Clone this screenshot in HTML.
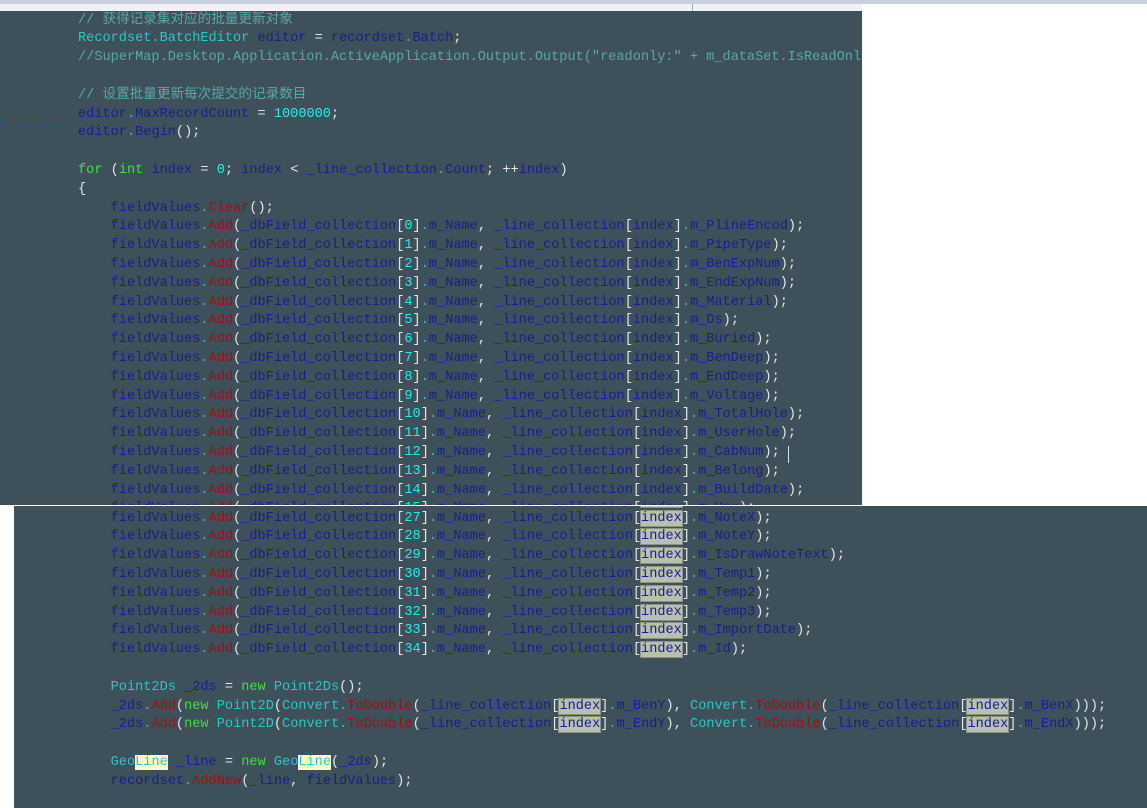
<!DOCTYPE html>
<html><head><meta charset="utf-8">
<style>
html,body{margin:0;padding:0;background:#fff;width:1147px;height:808px;overflow:hidden;position:relative}
.bar{position:absolute;left:0;top:0;width:1147px;height:4px;background:#c8d0e0}
.tab{position:absolute;left:0;top:4px;width:862px;height:7px;background:#f0f2f6;overflow:hidden}
.tab .dv{position:absolute;left:692px;top:0;width:1px;height:7px;background:#a0a8b8}
.panel{position:absolute;background:#3e505a;overflow:hidden}
#p1{left:0;top:11px;width:862px;height:494px}
#p2{left:14px;top:506px;width:1133px;height:302px}
.l{position:absolute;white-space:pre;font-family:"Liberation Mono","Noto Sans CJK SC",monospace;font-size:13.6px;line-height:18.8px;height:18.8px;color:#16208e}
.n{color:#16208e}.t{color:#2cc6c6}.c{color:#58a8a8}.m{color:#9a1212}.k{color:#3ee03e}.d{color:#22eeee}.p{color:#e6e6e6}.o{color:#3ab8c0}
.h{background:#b9c0b2;outline:1px solid #8c9282}
.y{background:#ffffc0;color:#2cc6c6}
.red{position:absolute;left:0;top:123px;width:50px;height:1px;border-top:1px dashed #c02020}
.cur{position:absolute;left:788px;top:446px;width:1px;height:17px;background:#e0e0e0}
</style></head><body>
<div class="bar"></div>
<div class="tab"><div class="dv"></div></div>
<div class="panel" id="p1">
<div class="l c" style="left:78px;top:0.6px">// 获得记录集对应的批量更新对象</div>
<div class="l" style="left:78px;top:19.4px"><span class="t">Recordset.BatchEditor</span> editor <span class="p">=</span> recordset<span class="o">.</span>Batch<span class="p">;</span></div>
<div class="l c" style="left:78px;top:38.2px">//SuperMap.Desktop.Application.ActiveApplication.Output.Output("readonly:" + m_dataSet.IsReadOnly);</div>
<div class="l c" style="left:78px;top:75.8px">// 设置批量更新每次提交的记录数目</div>
<div class="l" style="left:78px;top:94.6px">editor<span class="o">.</span>MaxRecordCount <span class="p">=</span> <span class="d">1000000</span><span class="p">;</span></div>
<div class="l" style="left:78px;top:113.4px">editor<span class="o">.</span>Begin<span class="p">();</span></div>
<div class="l" style="left:78px;top:151px"><span class="k">for</span> <span class="p">(</span><span class="k">int</span> index <span class="p">=</span> <span class="d">0</span><span class="p">;</span> index <span class="p">&lt;</span> _line_collection<span class="o">.</span>Count<span class="p">;</span> <span class="p">++</span>index<span class="p">)</span></div>
<div class="l p" style="left:78px;top:169.8px">{</div>
<div class="l" style="left:78px;top:188.6px">    fieldValues<span class="o">.</span><span class="m">Clear</span><span class="p">();</span></div>
<div class="l" style="left:78px;top:207.4px">    fieldValues<span class="o">.</span><span class="m">Add</span><span class="p">(</span>_dbField_collection<span class="p">[</span><span class="d">0</span><span class="p">]</span><span class="o">.</span>m_Name<span class="p">,</span> _line_collection<span class="p">[</span>index<span class="p">]</span><span class="o">.</span>m_PlineEncod<span class="p">);</span></div>
<div class="l" style="left:78px;top:226.2px">    fieldValues<span class="o">.</span><span class="m">Add</span><span class="p">(</span>_dbField_collection<span class="p">[</span><span class="d">1</span><span class="p">]</span><span class="o">.</span>m_Name<span class="p">,</span> _line_collection<span class="p">[</span>index<span class="p">]</span><span class="o">.</span>m_PipeType<span class="p">);</span></div>
<div class="l" style="left:78px;top:245px">    fieldValues<span class="o">.</span><span class="m">Add</span><span class="p">(</span>_dbField_collection<span class="p">[</span><span class="d">2</span><span class="p">]</span><span class="o">.</span>m_Name<span class="p">,</span> _line_collection<span class="p">[</span>index<span class="p">]</span><span class="o">.</span>m_BenExpNum<span class="p">);</span></div>
<div class="l" style="left:78px;top:263.8px">    fieldValues<span class="o">.</span><span class="m">Add</span><span class="p">(</span>_dbField_collection<span class="p">[</span><span class="d">3</span><span class="p">]</span><span class="o">.</span>m_Name<span class="p">,</span> _line_collection<span class="p">[</span>index<span class="p">]</span><span class="o">.</span>m_EndExpNum<span class="p">);</span></div>
<div class="l" style="left:78px;top:282.6px">    fieldValues<span class="o">.</span><span class="m">Add</span><span class="p">(</span>_dbField_collection<span class="p">[</span><span class="d">4</span><span class="p">]</span><span class="o">.</span>m_Name<span class="p">,</span> _line_collection<span class="p">[</span>index<span class="p">]</span><span class="o">.</span>m_Material<span class="p">);</span></div>
<div class="l" style="left:78px;top:301.4px">    fieldValues<span class="o">.</span><span class="m">Add</span><span class="p">(</span>_dbField_collection<span class="p">[</span><span class="d">5</span><span class="p">]</span><span class="o">.</span>m_Name<span class="p">,</span> _line_collection<span class="p">[</span>index<span class="p">]</span><span class="o">.</span>m_Ds<span class="p">);</span></div>
<div class="l" style="left:78px;top:320.2px">    fieldValues<span class="o">.</span><span class="m">Add</span><span class="p">(</span>_dbField_collection<span class="p">[</span><span class="d">6</span><span class="p">]</span><span class="o">.</span>m_Name<span class="p">,</span> _line_collection<span class="p">[</span>index<span class="p">]</span><span class="o">.</span>m_Buried<span class="p">);</span></div>
<div class="l" style="left:78px;top:339px">    fieldValues<span class="o">.</span><span class="m">Add</span><span class="p">(</span>_dbField_collection<span class="p">[</span><span class="d">7</span><span class="p">]</span><span class="o">.</span>m_Name<span class="p">,</span> _line_collection<span class="p">[</span>index<span class="p">]</span><span class="o">.</span>m_BenDeep<span class="p">);</span></div>
<div class="l" style="left:78px;top:357.8px">    fieldValues<span class="o">.</span><span class="m">Add</span><span class="p">(</span>_dbField_collection<span class="p">[</span><span class="d">8</span><span class="p">]</span><span class="o">.</span>m_Name<span class="p">,</span> _line_collection<span class="p">[</span>index<span class="p">]</span><span class="o">.</span>m_EndDeep<span class="p">);</span></div>
<div class="l" style="left:78px;top:376.6px">    fieldValues<span class="o">.</span><span class="m">Add</span><span class="p">(</span>_dbField_collection<span class="p">[</span><span class="d">9</span><span class="p">]</span><span class="o">.</span>m_Name<span class="p">,</span> _line_collection<span class="p">[</span>index<span class="p">]</span><span class="o">.</span>m_Voltage<span class="p">);</span></div>
<div class="l" style="left:78px;top:395.4px">    fieldValues<span class="o">.</span><span class="m">Add</span><span class="p">(</span>_dbField_collection<span class="p">[</span><span class="d">10</span><span class="p">]</span><span class="o">.</span>m_Name<span class="p">,</span> _line_collection<span class="p">[</span>index<span class="p">]</span><span class="o">.</span>m_TotalHole<span class="p">);</span></div>
<div class="l" style="left:78px;top:414.2px">    fieldValues<span class="o">.</span><span class="m">Add</span><span class="p">(</span>_dbField_collection<span class="p">[</span><span class="d">11</span><span class="p">]</span><span class="o">.</span>m_Name<span class="p">,</span> _line_collection<span class="p">[</span>index<span class="p">]</span><span class="o">.</span>m_UserHole<span class="p">);</span></div>
<div class="l" style="left:78px;top:433px">    fieldValues<span class="o">.</span><span class="m">Add</span><span class="p">(</span>_dbField_collection<span class="p">[</span><span class="d">12</span><span class="p">]</span><span class="o">.</span>m_Name<span class="p">,</span> _line_collection<span class="p">[</span>index<span class="p">]</span><span class="o">.</span>m_CabNum<span class="p">);</span></div>
<div class="l" style="left:78px;top:451.8px">    fieldValues<span class="o">.</span><span class="m">Add</span><span class="p">(</span>_dbField_collection<span class="p">[</span><span class="d">13</span><span class="p">]</span><span class="o">.</span>m_Name<span class="p">,</span> _line_collection<span class="p">[</span>index<span class="p">]</span><span class="o">.</span>m_Belong<span class="p">);</span></div>
<div class="l" style="left:78px;top:470.6px">    fieldValues<span class="o">.</span><span class="m">Add</span><span class="p">(</span>_dbField_collection<span class="p">[</span><span class="d">14</span><span class="p">]</span><span class="o">.</span>m_Name<span class="p">,</span> _line_collection<span class="p">[</span>index<span class="p">]</span><span class="o">.</span>m_BuildDate<span class="p">);</span></div>
<div class="l" style="left:78px;top:489.4px">    fieldValues<span class="o">.</span><span class="m">Add</span><span class="p">(</span>_dbField_collection<span class="p">[</span><span class="d">15</span><span class="p">]</span><span class="o">.</span>m_Name<span class="p">,</span> _line_collection<span class="p">[</span>index<span class="p">]</span><span class="o">.</span>m_Use<span class="p">);</span></div>
</div>
<div class="red"></div>
<div class="cur"></div>
<div class="panel" id="p2">
<div class="l" style="left:64px;top:-15.2px">    fieldValues<span class="o">.</span><span class="m">Add</span><span class="p">(</span>_dbField_collection<span class="p">[</span><span class="d">26</span><span class="p">]</span><span class="o">.</span>m_Name<span class="p">,</span> _line_collection<span class="p">[</span><span class="h">index</span><span class="p">]</span><span class="o">.</span>m_NoteText<span class="p">);</span></div>
<div class="l" style="left:64px;top:3.6px">    fieldValues<span class="o">.</span><span class="m">Add</span><span class="p">(</span>_dbField_collection<span class="p">[</span><span class="d">27</span><span class="p">]</span><span class="o">.</span>m_Name<span class="p">,</span> _line_collection<span class="p">[</span><span class="h">index</span><span class="p">]</span><span class="o">.</span>m_NoteX<span class="p">);</span></div>
<div class="l" style="left:64px;top:22.4px">    fieldValues<span class="o">.</span><span class="m">Add</span><span class="p">(</span>_dbField_collection<span class="p">[</span><span class="d">28</span><span class="p">]</span><span class="o">.</span>m_Name<span class="p">,</span> _line_collection<span class="p">[</span><span class="h">index</span><span class="p">]</span><span class="o">.</span>m_NoteY<span class="p">);</span></div>
<div class="l" style="left:64px;top:41.2px">    fieldValues<span class="o">.</span><span class="m">Add</span><span class="p">(</span>_dbField_collection<span class="p">[</span><span class="d">29</span><span class="p">]</span><span class="o">.</span>m_Name<span class="p">,</span> _line_collection<span class="p">[</span><span class="h">index</span><span class="p">]</span><span class="o">.</span>m_IsDrawNoteText<span class="p">);</span></div>
<div class="l" style="left:64px;top:60px">    fieldValues<span class="o">.</span><span class="m">Add</span><span class="p">(</span>_dbField_collection<span class="p">[</span><span class="d">30</span><span class="p">]</span><span class="o">.</span>m_Name<span class="p">,</span> _line_collection<span class="p">[</span><span class="h">index</span><span class="p">]</span><span class="o">.</span>m_Temp1<span class="p">);</span></div>
<div class="l" style="left:64px;top:78.8px">    fieldValues<span class="o">.</span><span class="m">Add</span><span class="p">(</span>_dbField_collection<span class="p">[</span><span class="d">31</span><span class="p">]</span><span class="o">.</span>m_Name<span class="p">,</span> _line_collection<span class="p">[</span><span class="h">index</span><span class="p">]</span><span class="o">.</span>m_Temp2<span class="p">);</span></div>
<div class="l" style="left:64px;top:97.6px">    fieldValues<span class="o">.</span><span class="m">Add</span><span class="p">(</span>_dbField_collection<span class="p">[</span><span class="d">32</span><span class="p">]</span><span class="o">.</span>m_Name<span class="p">,</span> _line_collection<span class="p">[</span><span class="h">index</span><span class="p">]</span><span class="o">.</span>m_Temp3<span class="p">);</span></div>
<div class="l" style="left:64px;top:116.4px">    fieldValues<span class="o">.</span><span class="m">Add</span><span class="p">(</span>_dbField_collection<span class="p">[</span><span class="d">33</span><span class="p">]</span><span class="o">.</span>m_Name<span class="p">,</span> _line_collection<span class="p">[</span><span class="h">index</span><span class="p">]</span><span class="o">.</span>m_ImportDate<span class="p">);</span></div>
<div class="l" style="left:64px;top:135.2px">    fieldValues<span class="o">.</span><span class="m">Add</span><span class="p">(</span>_dbField_collection<span class="p">[</span><span class="d">34</span><span class="p">]</span><span class="o">.</span>m_Name<span class="p">,</span> _line_collection<span class="p">[</span><span class="h">index</span><span class="p">]</span><span class="o">.</span>m_Id<span class="p">);</span></div>
<div class="l" style="left:64px;top:172.8px">    <span class="t">Point2Ds</span> _2ds <span class="p">=</span> <span class="k">new</span> <span class="t">Point2Ds</span><span class="p">();</span></div>
<div class="l" style="left:64px;top:191.6px">    _2ds<span class="o">.</span><span class="m">Add</span><span class="p">(</span><span class="k">new</span> <span class="t">Point2D</span><span class="p">(</span><span class="t">Convert</span><span class="o">.</span><span class="m">ToDouble</span><span class="p">(</span>_line_collection<span class="p">[</span><span class="h">index</span><span class="p">]</span><span class="o">.</span>m_BenY<span class="p">),</span> <span class="t">Convert</span><span class="o">.</span><span class="m">ToDouble</span><span class="p">(</span>_line_collection<span class="p">[</span><span class="h">index</span><span class="p">]</span><span class="o">.</span>m_BenX<span class="p">)));</span></div>
<div class="l" style="left:64px;top:210.4px">    _2ds<span class="o">.</span><span class="m">Add</span><span class="p">(</span><span class="k">new</span> <span class="t">Point2D</span><span class="p">(</span><span class="t">Convert</span><span class="o">.</span><span class="m">ToDouble</span><span class="p">(</span>_line_collection<span class="p">[</span><span class="h">index</span><span class="p">]</span><span class="o">.</span>m_EndY<span class="p">),</span> <span class="t">Convert</span><span class="o">.</span><span class="m">ToDouble</span><span class="p">(</span>_line_collection<span class="p">[</span><span class="h">index</span><span class="p">]</span><span class="o">.</span>m_EndX<span class="p">)));</span></div>
<div class="l" style="left:64px;top:248px">    <span class="t">Geo</span><span class="y">Line</span> _line <span class="p">=</span> <span class="k">new</span> <span class="t">Geo</span><span class="y">Line</span><span class="p">(</span>_2ds<span class="p">);</span></div>
<div class="l" style="left:64px;top:266.8px">    recordset<span class="o">.</span><span class="m">AddNew</span><span class="p">(</span>_line<span class="p">,</span> fieldValues<span class="p">);</span></div>
</div>
</body></html>
